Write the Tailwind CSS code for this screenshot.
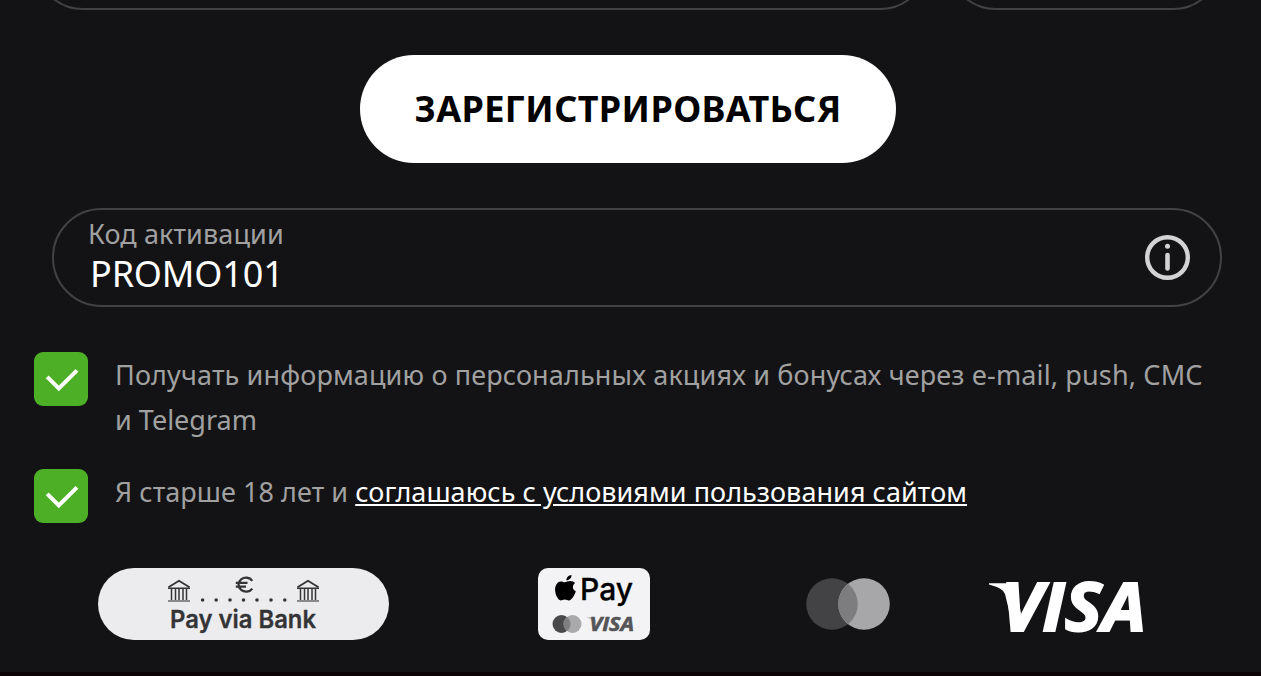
<!DOCTYPE html>
<html lang="ru">
  <head>
    <meta charset="UTF-8" />
    <meta name="viewport" content="width=device-width, initial-scale=1.0" />
    <script src="https://cdn.jsdelivr.net/npm/@tailwindcss/browser@4"></script>
    <title>Регистрация</title>
  </head>
  <body class="bg-[#131315] font-['Noto_Sans',sans-serif]">
    <div class="w-[1261px] h-[676px] overflow-hidden flex flex-col">
      <!-- previous row of fields -->
      <div class="h-[10px] shrink-0 flex items-end gap-[18px] pl-[34px]">
        <div class="w-[895px] h-[98px] shrink-0 rounded-full border-2 border-[#424244]"></div>
        <div class="w-[275px] h-[98px] shrink-0 rounded-full border-2 border-[#424244]"></div>
      </div>

      <button class="mt-[45px] ml-[360px] w-[536px] h-[108px] shrink-0 rounded-full bg-white text-black text-[36px] tracking-[0.34px] font-bold whitespace-nowrap">
        ЗАРЕГИСТРИРОВАТЬСЯ
      </button>

      <div class="mt-[45px] ml-[52px] w-[1170px] h-[99px] shrink-0 rounded-full border-2 border-[#424244] flex items-center justify-between pl-[34px] pr-[30px]">
        <div class="flex flex-col pb-[3px]">
          <label class="text-[27px] leading-[36px] tracking-[0.1px] text-[#a1a1a1]">Код активации</label>
          <span class="pl-[2px] text-[36px] leading-[44px] tracking-[-0.15px] text-white">PROMO101</span>
        </div>
        <svg class="w-[46px] h-[46px]" viewBox="0 0 46 46" fill="none">
          <circle cx="23.5" cy="22.5" r="20.3" stroke="#d3d3d4" stroke-width="4.4" />
          <circle cx="23.5" cy="11.2" r="2.5" fill="#d3d3d4" />
          <path d="M23.5 20V33.5" stroke="#d3d3d4" stroke-width="4.6" stroke-linecap="round" />
        </svg>
      </div>

      <div class="mt-[45px] pl-[34px] flex shrink-0 h-[117px]">
        <div class="w-[54px] h-[54px] shrink-0 rounded-[9px] bg-[#4caf25]">
          <svg class="w-full h-full" viewBox="0 0 54 54" fill="none">
            <path d="M13.2 24.8L24.8 36.4L43 18.4" stroke="#fff" stroke-width="4" />
          </svg>
        </div>
        <p class="ml-[27px] text-[27px] leading-[45px] text-[#a1a1a1] whitespace-nowrap">
          <span class="tracking-[0.135px]">Получать информацию о персональных акциях и бонусах через e-mail, push, СМС</span><br />и Telegram
        </p>
      </div>

      <div class="pl-[34px] flex shrink-0 h-[54px]">
        <div class="w-[54px] h-[54px] shrink-0 rounded-[9px] bg-[#4caf25]">
          <svg class="w-full h-full" viewBox="0 0 54 54" fill="none">
            <path d="M13.2 24.8L24.8 36.4L43 18.4" stroke="#fff" stroke-width="4" />
          </svg>
        </div>
        <p class="ml-[27px] text-[27px] leading-[45px] tracking-[0.05px] text-[#a1a1a1] whitespace-nowrap">
          Я старше 18 лет и <a class="text-white underline">соглашаюсь с условиями пользования сайтом</a>
        </p>
      </div>

      <!-- payment methods -->
      <div class="mt-[45px] pl-[98px] flex shrink-0 h-[72px]">
        <svg class="w-[291px] h-[72px] shrink-0 rounded-full bg-[#ececee]" viewBox="0 0 291 72" fill="none">
          <g id="bank" stroke="#343437" stroke-width="1.5">
            <path d="M70.5 19.3L81 12.8L91.5 19.3" stroke-width="1.9" />
            <path d="M70 20.3H92M73.5 20V32M77.5 20V32M81 20V32M85 20V32M88.5 20V32" />
            <path d="M70 33H92" stroke="#8a8a8c" stroke-width="1.8" />
          </g>
          <use href="#bank" x="129" />
          <g fill="#343437">
            <circle cx="104.6" cy="32" r="1.8" />
            <circle cx="118.2" cy="32" r="1.8" />
            <circle cx="132" cy="32" r="1.8" />
            <circle cx="145.5" cy="32" r="1.8" />
            <circle cx="159" cy="32" r="1.8" />
            <circle cx="173" cy="32" r="1.8" />
            <circle cx="186.8" cy="32" r="1.8" />
          </g>
          <path d="M154.3 12.8A7.5 7 0 1 0 154.3 20.6M137.8 14.9H149.5M137.8 18.6H148" stroke="#343437" stroke-width="2.3" />
          <text x="72" y="60" textLength="146" lengthAdjust="spacingAndGlyphs" class="font-['Inter',sans-serif] text-[24.5px] font-semibold" fill="#343437" stroke="#343437" stroke-width="0.3">Pay via Bank</text>
        </svg>

        <svg class="ml-[149px] w-[112px] h-[72px] shrink-0 rounded-[10px] bg-[#f3f3f5]" viewBox="0 0 112 72">
          <path fill="#000" d="M33.5 7C33.7 9.8 31.2 12.4 28.4 12.3C28.2 9.7 30.7 7.1 33.5 7ZM37.2 15C34 17 34.1 21.6 37.8 23.3C36.8 26.2 34.8 30.7 31.9 32.2C30 33 29.1 31.4 26.8 31.4C24.4 31.4 23.5 33.1 21.7 32.1C18.5 30 16.2 23.3 17.4 18.7C18.6 14.3 22.1 12.5 25.3 13.9C26.7 14.5 27.4 14.2 29.1 13.6C32.3 12.4 35.4 13 37.2 15Z" />
          <text x="42" y="32" textLength="53" lengthAdjust="spacingAndGlyphs" class="font-['Inter',sans-serif] text-[30.5px] font-medium" fill="#000" stroke="#000" stroke-width="0.3">Pay</text>
          <circle cx="23.5" cy="56" r="9" fill="#49494b" />
          <circle cx="34.5" cy="56" r="9" fill="#a9a9ab" />
          <path d="M29 48.9A9 9 0 0 1 29 63.1A9 9 0 0 1 29 48.9Z" fill="#7f7f81" />
          <path d="M48 49.2H55Q56.7 49.3 57.2 51.6L58 56Q54 50.8 48 49.2Z" fill="#b5b5b7" />
          <text x="51.5" y="63.3" textLength="44.5" lengthAdjust="spacingAndGlyphs" class="font-['Open_Sans',sans-serif] text-[19.5px] font-bold italic" fill="#555558" stroke="#555558" stroke-width="0.6">VISA</text>
        </svg>

        <svg class="ml-[155px] w-[86px] h-[72px] shrink-0" viewBox="0 0 86 72">
          <circle cx="27" cy="36" r="25.8" fill="#434345" />
          <circle cx="59" cy="36" r="25.8" fill="#a7a7a9" />
          <path d="M43 15.8A25.8 25.8 0 0 1 43 56.2A25.8 25.8 0 0 1 43 15.8Z" fill="#7d7d7f" />
        </svg>

        <svg class="ml-[98px] w-[170px] h-[72px] shrink-0 overflow-visible" viewBox="0 0 170 72">
          <path d="M0 15.3H21.5Q26.5 15.6 27.5 20L32 46L24 59L16 26Q14.5 20.5 0 16.6Z" fill="#fff" />
          <text x="12" y="63.4" textLength="145" lengthAdjust="spacingAndGlyphs" class="font-['Open_Sans',sans-serif] text-[66px] font-bold italic" fill="#fff" stroke="#fff" stroke-width="2">VISA</text>
        </svg>
      </div>

      <div class="mt-[32px] h-[4px] shrink-0 bg-[#0b0305]"></div>
    </div>
  </body>
</html>
